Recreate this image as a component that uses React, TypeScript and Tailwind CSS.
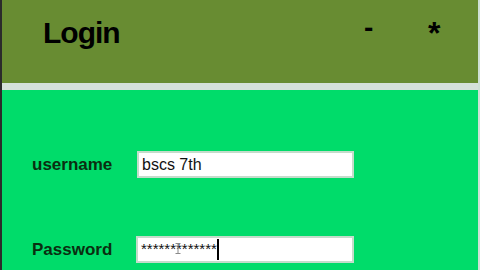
export default function App() {
  return (
    <div className="w-[480px] h-[270px] flex flex-col border-l-2 border-[#2b2b2b] border-r-2 border-r-[#cfe0d6] overflow-hidden font-['Liberation_Sans',Arial,sans-serif]">
      {/* Title bar */}
      <div className="h-[83px] shrink-0 bg-[#688c32] flex items-start text-black font-bold">
        <div className="w-[362px] pl-[41px] pt-[18px]">
          <span className="text-[30px] leading-none tracking-[-1px]">Login</span>
        </div>
        <div className="w-[64px] pt-[14px]">
          <span className="text-[28px] leading-none">-</span>
        </div>
        <div className="pt-[17px]">
          <span className="text-[32px] leading-none">*</span>
        </div>
      </div>

      <div className="h-[7px] shrink-0 bg-[#d5e1da]" />

      {/* Form */}
      <div className="flex-1 bg-[#00dc6a] flex flex-col pt-[61px] gap-[58px] pl-[30px]">
        <div className="flex items-center">
          <span className="w-[105px] text-[17px] font-bold text-[#0a2e10]">username</span>
          <div className="w-[217px] h-[27px] bg-white border-2 border-[#c4dccb] flex items-center pl-[3px] text-[16px] text-[#111]">
            bscs 7th
          </div>
        </div>
        <div className="flex items-center">
          <span className="w-[104px] text-[17px] font-bold text-[#0a2e10]">Password</span>
          <div className="relative w-[218px] h-[27px] bg-white border-2 border-[#c4dccb] flex items-center pl-[3px] text-[15px] text-[#111]">
            <span>*************</span>
            <span className="w-[2px] h-[21px] bg-black" />
            <svg className="absolute left-[37px] top-[5px]" width="6" height="11" viewBox="0 0 6 11">
              <path d="M0.5 0.5h5M3 0.5v10M0.5 10.5h5" stroke="#8a8a8a" strokeWidth="1" fill="none" />
            </svg>
          </div>
        </div>
      </div>
    </div>
  );
}
